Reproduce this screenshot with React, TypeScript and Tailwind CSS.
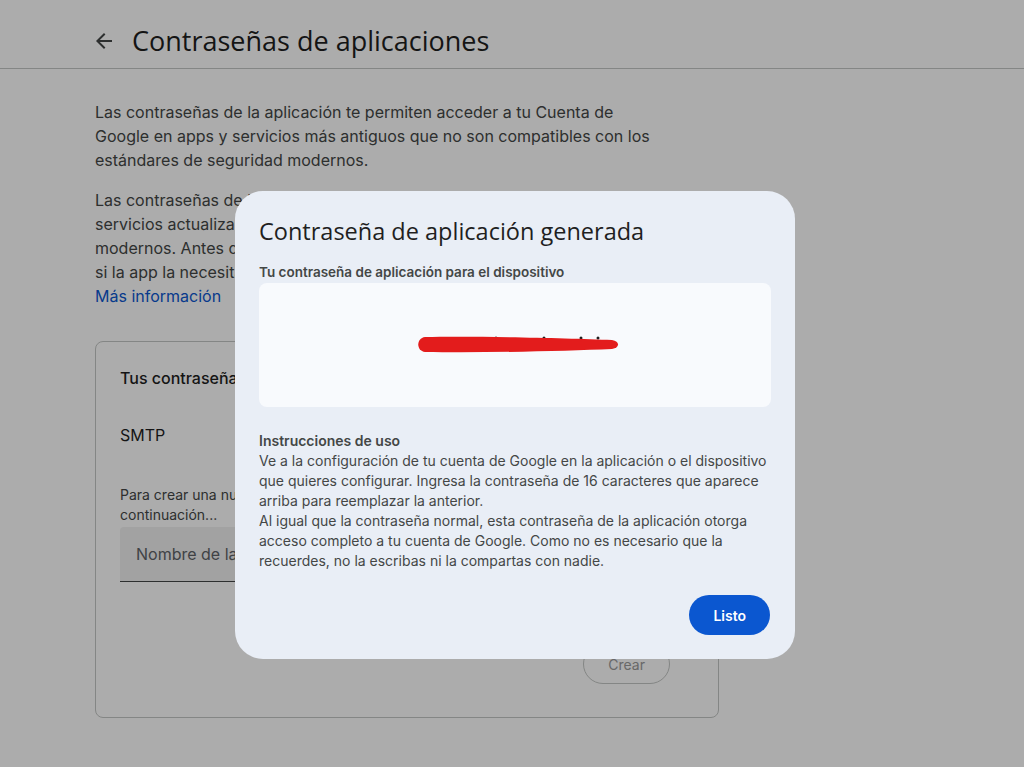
import { useState } from "react";

const bodyFont = { fontFamily: "Inter, Roboto, 'Noto Sans', sans-serif" };
const headFont = { fontFamily: "'Open Sans', Roboto, sans-serif" };

function BackArrow() {
  return (
    <svg width="24" height="24" viewBox="0 0 24 24" fill="#444746">
      <path d="M20 11H7.83l5.59-5.59L12 4l-8 8 8 8 1.41-1.41L7.83 13H20v-2z" />
    </svg>
  );
}

function GeneratedDialog() {
  return (
    <div className="fixed inset-0 bg-[rgba(0,0,0,0.325)]">
      <div className="absolute left-[235px] top-[191px] w-[560px] rounded-[28px] bg-[#e9eef6] px-6 pt-6 pb-6">
        <h2 className="text-[23.5px] leading-8 text-[#1f1f1f]" style={headFont}>
          Contraseña de aplicación generada
        </h2>
        <p className="mt-[15px] text-[13.5px] leading-5 font-semibold text-[#444746]">
          Tu contraseña de aplicación para el dispositivo
        </p>
        <div className="mt-px flex h-[124px] items-center justify-center rounded-lg bg-[#f8fafd]">
          {/* redacted password */}
          <svg width="204" height="20" viewBox="0 0 204 20" className="ml-[5px]">
            <circle cx="80" cy="3" r="1.5" fill="#1f1f1f" />
            <circle cx="128" cy="3" r="1.5" fill="#1f1f1f" />
            <circle cx="165" cy="3" r="1.5" fill="#1f1f1f" />
            <circle cx="182" cy="3" r="1.5" fill="#1f1f1f" />
            <path
              d="M9 2 C 60 1, 150 3, 196 5 C 204 6, 204 13, 196 14 C 150 16, 70 18, 9 17 C 0 16, 0 3, 9 2 Z"
              fill="#e31c1c"
            />
          </svg>
        </div>
        <div className="mt-6 text-[14px] leading-5 text-[#444746]">
          <p className="font-semibold">Instrucciones de uso</p>
          <p>
            Ve a la configuración de tu cuenta de Google en la aplicación o el dispositivo que quieres
            configurar. Ingresa la contraseña de 16 caracteres que aparece arriba para reemplazar la
            anterior.
          </p>
          <p>
            Al igual que la contraseña normal, esta contraseña de la aplicación otorga acceso completo
            a tu cuenta de Google. Como no es necesario que la recuerdes, no la escribas ni la
            compartas con nadie.
          </p>
        </div>
        <div className="mt-6 flex justify-end pr-px">
          <button className="h-10 rounded-full bg-[#0b57d0] px-6 text-[14px] font-semibold text-white">
            Listo
          </button>
        </div>
      </div>
    </div>
  );
}

export default function App() {
  const [name, setName] = useState("");

  return (
    <div className="relative min-h-screen bg-white" style={bodyFont}>
      <header className="flex h-[69px] items-center gap-4 border-b border-[#c4c7c5] pl-[92px] pt-[14px]">
        <button className="flex">
          <BackArrow />
        </button>
        <h1 className="text-[27px] text-[#1f1f1f]" style={headFont}>
          Contraseñas de aplicaciones
        </h1>
      </header>

      <main className="pl-[95px] pt-[31px]">
        <div className="w-[570px] text-[16px] leading-6 text-[#444746]">
          <p>
            Las contraseñas de la aplicación te permiten acceder a tu Cuenta de
            <br />
            Google en apps y servicios más antiguos que no son compatibles con los
            <br />
            estándares de seguridad modernos.
          </p>
          <p className="mt-4">
            Las contraseñas de la aplicación no se recomiendan en apps y
            <br />
            servicios actualizados, que usan estándares de seguridad
            <br />
            modernos. Antes de crear una, comprueba
            <br />
            si la app la necesita para acceder.
          </p>
          <a href="#" className="text-[#0b57d0]">
            Más información
          </a>
        </div>

        <section className="mt-[33px] w-[624px] rounded-lg border border-[#c4c7c5] px-6 pt-6 pb-[33px]">
          <h3 className="text-[16px] leading-6 font-medium text-[#1f1f1f]">
            Tus contraseñas de aplicaciones
          </h3>
          <div className="mt-[33px] text-[16px] leading-6 text-[#1f1f1f]">SMTP</div>
          <p className="mt-[38px] text-[14px] leading-5 text-[#444746]">
            Para crear una nueva contraseña específica de la app, escribe un nombre a
            <br />
            continuación...
          </p>
          <input
            value={name}
            onChange={(e) => setName(e.target.value)}
            placeholder="Nombre de la app"
            className="mt-[2px] h-[55px] w-full rounded-t bg-[#f0f0f0] border-b border-[#444746] px-4 text-[16px] text-[#1f1f1f] placeholder:text-[#5f6368] outline-none"
          />
          <div className="mt-[62px] flex justify-end pr-[24px]">
            <button className="h-10 rounded-full border border-[#c4c7c5] px-6 text-[14px] text-[#9a9a9a]">
              Crear
            </button>
          </div>
        </section>
      </main>

      <GeneratedDialog />
    </div>
  );
}
